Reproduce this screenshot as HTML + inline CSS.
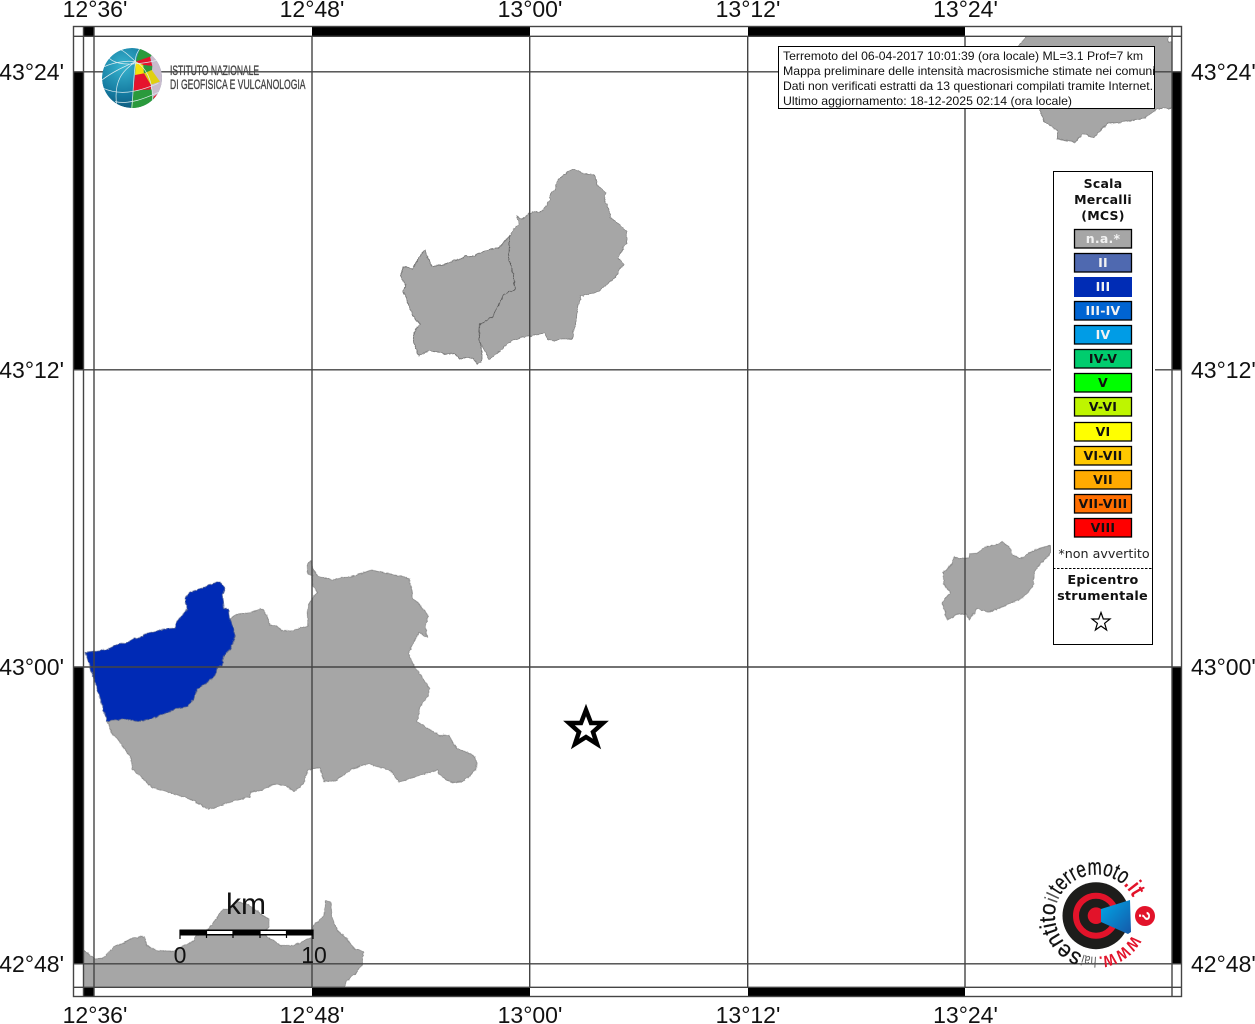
<!DOCTYPE html>
<html><head><meta charset="utf-8"><style>
html,body{margin:0;padding:0;background:#fff}
svg{display:block}
.lab{font:23px "Liberation Sans",sans-serif;fill:#111}
.leg{font:bold 12.500px "DejaVu Sans",sans-serif;text-anchor:middle;letter-spacing:.25px}
.tt{font:12px "Liberation Sans",sans-serif;fill:#111}
</style></head><body>
<svg width="1255" height="1024" viewBox="0 0 1255 1024" xmlns="http://www.w3.org/2000/svg">
<defs>
<clipPath id="mapclip"><rect x="84" y="36" width="1088" height="951"/></clipPath>
<clipPath id="gclip"><circle cx="111" cy="114" r="90"/></clipPath>
<filter id="rough" x="0" y="0" width="100%" height="100%" filterUnits="userSpaceOnUse" primitiveUnits="userSpaceOnUse">
<feTurbulence type="turbulence" baseFrequency=".16" numOctaves="2" seed="4" result="n"/>
<feDisplacementMap in="SourceGraphic" in2="n" scale="2.200" xChannelSelector="R" yChannelSelector="G"/>
</filter>
<radialGradient id="gb" cx="35%" cy="30%" r="80%"><stop offset="0" stop-color="#38b4cf"/><stop offset=".6" stop-color="#14799f"/><stop offset="1" stop-color="#0c4f72"/></radialGradient>
<linearGradient id="meg" x1="0" y1="0" x2="1" y2="1"><stop offset="0" stop-color="#00a8e8"/><stop offset="1" stop-color="#1558a8"/></linearGradient>
<path id="arc" d="M1136.400 922.800A41 41 0 1 1 1055.600 908.600A41 41 0 1 1 1136.400 922.800" fill="none"/>
</defs>
<g clip-path="url(#mapclip)"><g stroke-linejoin="round" filter="url(#rough)">
<g transform="translate(390 160) scale(.33333)" fill="#a6a6a6" stroke="#808080" stroke-width="2.200">
<polygon points="358,225 370,205 385,190 378,168 395,175 418,158 430,152 450,155 465,138 478,118 480,98 492,90 498,65 520,42 550,25 575,38 610,42 622,75 645,95 642,118 655,145 660,170 685,190 708,212 710,245 698,265 682,292 700,312 688,325 675,350 640,378 625,392 572,407 560,450 558,480 548,510 546,535 515,535 490,542 472,535 462,517 420,527 395,530 365,540 345,555 320,578 295,597 285,575 265,540 268,490 305,470 330,420 340,402 373,388 370,345 362,320 355,290"/>
<polygon stroke="#555" points="358,225 355,290 362,320 370,345 373,388 340,402 330,420 305,470 268,490 265,540 272,560 275,600 260,610 248,595 225,590 208,595 190,578 160,580 115,570 85,585 67,540 75,505 88,490 70,470 55,435 38,390 45,375 30,345 38,320 50,318 65,325 80,300 102,268 115,300 127,318 160,312 180,303 210,295 225,286 240,290 270,278 300,265 325,262 340,245"/>
<polyline fill="none" stroke="#808080" points="30,345 38,320 50,318 65,325 80,300 102,268 115,300 127,318 160,312 180,303 210,295 225,286 240,290 270,278 300,265 325,262 340,245 358,225"/>
<polyline fill="none" stroke="#808080" points="272,560 275,600 260,610 248,595 225,590 208,595 190,578 160,580 115,570 85,585 67,540 75,505 88,490 70,470 55,435 38,390 45,375 30,345"/>
</g>
<g transform="translate(75 550) scale(.33333)" stroke-width="2.200">
<polygon fill="#a6a6a6" stroke="#808080" points="95,512 150,505 195,512 240,500 300,475 335,468 355,445 365,415 395,395 420,375 425,350 440,345 445,315 465,295 478,258 462,205 490,190 525,185 560,175 570,185 582,222 605,228 618,240 650,240 698,225 695,185 705,150 725,125 710,105 712,75 697,70 695,40 705,30 712,55 725,75 770,88 800,80 830,78 855,70 885,58 915,65 945,70 1003,85 1012,145 1035,165 1058,195 1050,230 1055,262 1030,245 1010,285 998,310 1015,345 1035,375 1063,415 1055,440 1035,465 1025,512 1060,535 1090,555 1120,555 1145,595 1175,605 1200,620 1205,650 1190,670 1165,692 1130,697 1090,672 1085,658 1040,672 970,695 945,660 880,640 830,655 780,690 745,692 732,650 700,658 688,680 685,700 655,722 630,705 595,700 555,720 525,725 522,740 475,750 400,777 345,745 230,710 170,655 165,620 130,570 110,550"/>
<polygon fill="#002cb5" stroke="#4a5a90" points="30,305 95,297 135,277 150,278 175,264 190,264 215,248 270,235 298,233 305,210 335,177 328,140 345,125 375,115 400,103 432,93 448,112 440,135 445,175 458,175 462,205 475,235 478,258 465,295 445,315 440,345 425,350 420,375 395,395 365,415 355,445 335,468 300,475 240,500 195,512 150,505 95,512"/>
</g>
<g transform="translate(60 880) scale(.33333)" fill="#a6a6a6" stroke="#808080" stroke-width="2.200">
<polygon points="60,205 72,212 105,235 125,235 165,195 185,190 210,175 250,168 258,195 290,210 340,212 400,180 405,168 445,145 470,110 490,85 510,85 530,65 560,70 600,100 625,115 625,140 610,150 618,168 660,195 700,195 755,170 760,135 790,105 795,60 810,65 815,110 830,150 860,175 880,205 908,212 905,250 890,275 860,300 845,340 60,340"/>
</g>
<g transform="translate(930 530) scale(.33333)" fill="#a6a6a6" stroke="#808080" stroke-width="2.200">
<polygon points="38,125 65,100 70,78 85,85 115,82 118,70 140,68 165,48 190,45 215,33 240,55 245,72 268,85 285,75 320,55 360,45 362,65 320,110 310,130 308,165 290,190 270,205 245,215 200,235 175,245 140,235 118,268 105,250 85,250 50,267 42,235 33,218 60,185 40,160"/>
</g>
<polygon fill="#a6a6a6" stroke="#8a8a8a" points="1018,46 1030,30 1167,30 1168,42 1175,42 1175,108 1157,108 1145,117 1130,120 1118,122 1107,123 1093,137 1082,133 1075,142 1057,138 1057,130 1043,120 1040,108 1000,70"/>
</g></g>
<!-- frame strips -->
<g fill="#000">
<rect x="83" y="26" width="11" height="10"/><rect x="312" y="26" width="218" height="10"/><rect x="748" y="26" width="217" height="10"/>
<rect x="83" y="987" width="11" height="10"/><rect x="312" y="987" width="218" height="10"/><rect x="748" y="987" width="217" height="10"/>
<rect x="73" y="72" width="10" height="298"/><rect x="73" y="667" width="10" height="297"/>
<rect x="1172" y="72" width="10" height="298"/><rect x="1172" y="667" width="10" height="297"/>
</g>
<g fill="none" stroke="#444" stroke-width="1.400">
<rect x="73.500" y="26.500" width="1108" height="970"/>
<path d="M83.500 26V997M94 26V997M312 36V987M529.700 36V987M747.700 36V987M965 36V987M1172 26V997"/>
<path d="M73 36.300H1182M73 987.300H1182M73 71.800H1182M73 369.800H1182M73 667H1182M73 963.800H1182"/>
</g>
<!-- labels -->
<g class="lab">
<g text-anchor="middle">
<text x="95" y="17">12°36'</text><text x="312" y="17">12°48'</text><text x="530" y="17">13°00'</text><text x="748" y="17">13°12'</text><text x="965.500" y="17">13°24'</text>
<text x="95" y="1023">12°36'</text><text x="312" y="1023">12°48'</text><text x="530" y="1023">13°00'</text><text x="748" y="1023">13°12'</text><text x="965.500" y="1023">13°24'</text>
</g>
<g text-anchor="end">
<text x="64" y="80">43°24'</text><text x="64" y="378">43°12'</text><text x="64" y="675">43°00'</text><text x="64" y="972">42°48'</text>
</g>
<text x="1191" y="80">43°24'</text><text x="1191" y="378">43°12'</text><text x="1191" y="675">43°00'</text><text x="1191" y="972">42°48'</text>
</g>
<!-- INGV logo -->
<g transform="translate(95 40) scale(.33333)">
<g clip-path="url(#gclip)">
<circle cx="111" cy="114" r="90" fill="url(#gb)"/>
<polygon fill="#c9bccd" points="150,30 215,60 215,170 172,178 165,130 190,125 165,85 165,50"/>
<polygon fill="#2a9a3c" points="122,65 135,25 170,45 165,52"/>
<polygon fill="#e5132d" points="122,65 165,50 172,78 145,75"/>
<polygon fill="#f4e20a" points="122,65 145,75 147,100 120,108"/>
<polygon fill="#2a9a3c" points="145,75 172,78 170,102 147,100"/>
<polygon fill="#e0d010" points="170,90 195,125 165,135 147,100"/>
<polygon fill="#e5132d" points="120,105 147,100 168,135 168,150 115,152"/>
<polygon fill="#2a9a3c" points="115,152 170,148 176,178 150,215 105,215"/>
<polygon fill="#e5132d" points="176,170 190,160 175,190"/>
<g fill="none" stroke="#dcecf0" stroke-width="2.200">
<path d="M122 65C85 90 55 120 65 195M122 65C90 60 50 70 28 80M122 65C115 110 115 160 110 210M122 65C120 50 125 40 135 25M122 65C100 45 90 35 75 28"/>
<path d="M40 52C70 85 150 70 190 60M21 120C60 90 100 75 122 65M25 145C70 165 120 160 190 130M60 185C110 195 160 170 195 155M122 65C150 80 175 120 172 180"/>
</g>
</g>
</g>
<g font-family="'Liberation Sans',sans-serif" fill="#444" stroke="#444" stroke-width=".35" font-size="13.500">
<text x="170" y="75" textLength="89" lengthAdjust="spacingAndGlyphs">ISTITUTO NAZIONALE</text>
<text x="170" y="89" textLength="135.500" lengthAdjust="spacingAndGlyphs">DI GEOFISICA E VULCANOLOGIA</text>
</g>
<!-- title box -->
<rect x="778.500" y="46.500" width="376" height="62" fill="#fff" stroke="#000"/>
<g class="tt">
<text x="783" y="60" textLength="360" lengthAdjust="spacingAndGlyphs">Terremoto del 06-04-2017 10:01:39 (ora locale) ML=3.1 Prof=7 km</text>
<text x="783" y="75" textLength="372" lengthAdjust="spacingAndGlyphs">Mappa preliminare delle intensità macrosismiche stimate nei comuni</text>
<text x="783" y="90" textLength="370" lengthAdjust="spacingAndGlyphs">Dati non verificati estratti da 13 questionari compilati tramite Internet.</text>
<text x="783" y="105" textLength="289" lengthAdjust="spacingAndGlyphs">Ultimo aggiornamento: 18-12-2025 02:14 (ora locale)</text>
</g>
<!-- legend -->
<rect x="1051" y="169" width="104" height="478" fill="#fff"/>
<rect x="1053.500" y="171.500" width="99" height="473" fill="#fff" stroke="#000"/>
<g class="leg" fill="#111">
<text x="1103" y="188">Scala</text><text x="1103" y="204">Mercalli</text><text x="1103" y="220">(MCS)</text>
</g>
<g stroke="#000" stroke-width="1.300">
<rect x="1074.500" y="229.500" width="57" height="18.500" fill="#a6a6a6"/>
<rect x="1074.500" y="253.500" width="57" height="18.500" fill="#4f69b0"/>
<rect x="1074" y="277" width="58" height="20" fill="#002cb5" stroke="none"/>
<rect x="1074.500" y="301.500" width="57" height="18.500" fill="#0064d2"/>
<rect x="1074.500" y="325.500" width="57" height="18.500" fill="#009ce6"/>
<rect x="1074.500" y="349.500" width="57" height="18.500" fill="#00cd6e"/>
<rect x="1074.500" y="373.500" width="57" height="18.500" fill="#00ff00"/>
<rect x="1074.500" y="397.500" width="57" height="18.500" fill="#bef500"/>
<rect x="1074.500" y="422.500" width="57" height="18.500" fill="#ffff00"/>
<rect x="1074.500" y="446.500" width="57" height="18.500" fill="#ffc800"/>
<rect x="1074.500" y="470.500" width="57" height="18.500" fill="#ffaa00"/>
<rect x="1074.500" y="494.500" width="57" height="18.500" fill="#ff6e00"/>
<rect x="1074.500" y="518.500" width="57" height="18.500" fill="#ff0000"/>
</g>
<g class="leg" style="font-size:12.500px">
<g fill="#f2f2f2">
<text x="1103" y="243">n.a.*</text><text x="1103" y="267">II</text><text x="1103" y="291">III</text><text x="1103" y="315">III-IV</text><text x="1103" y="339">IV</text>
</g>
<g fill="#111">
<text x="1103" y="363">IV-V</text><text x="1103" y="387">V</text><text x="1103" y="411">V-VI</text><text x="1103" y="436">VI</text><text x="1103" y="460">VI-VII</text><text x="1103" y="484">VII</text><text x="1103" y="508">VII-VIII</text><text x="1103" y="532">VIII</text>
</g>
</g>
<text x="1104" y="558" text-anchor="middle" font-family="'DejaVu Sans',sans-serif" font-size="12.700" fill="#222">*non avvertito</text>
<line x1="1053" y1="568.500" x2="1152" y2="568.500" stroke="#000" stroke-dasharray="2.500 1.500"/>
<g class="leg" fill="#111" style="font-size:12.800px"><text x="1103" y="584">Epicentro</text><text x="1102.500" y="600">strumentale</text></g>
<polygon points="1101,612.500 1103.300,619 1110,619 1104.600,623.300 1106.600,630 1101,626 1095.400,630 1097.400,623.300 1092,619 1098.700,619" fill="#fff" stroke="#000" stroke-width="1.200"/>
<!-- big star -->
<polygon points="586,710 591,723 603,723 593,732 597,744 586,737 575,744 579,732 569,723 581,723" fill="#fff" stroke="#000" stroke-width="4.500" stroke-linejoin="miter"/>
<!-- scale -->
<g>
<rect x="179.500" y="929.500" width="134" height="6" fill="#000"/>
<rect x="206.800" y="931" width="26" height="3" fill="#fff"/>
<rect x="260" y="931" width="26.500" height="3" fill="#fff"/>
<path d="M180 930V939M206.500 930V938M233 930V938M260 930V938M286.500 930V938M313 930V939" stroke="#000" stroke-width="1.200"/>
<g font-family="'Liberation Sans',sans-serif" fill="#111" text-anchor="middle">
<text x="246" y="914" font-size="30">km</text>
<text x="180" y="963" font-size="23">0</text>
<text x="314" y="963" font-size="23">10</text>
</g>
</g>
<!-- hai sentito logo -->
<circle cx="1096" cy="915.700" r="33.500" fill="#1d1d1b"/>
<circle cx="1096" cy="915.700" r="20" fill="none" stroke="#e2132a" stroke-width="6"/>
<circle cx="1096" cy="915.700" r="8.300" fill="#e2132a"/>
<polygon points="1101,909 1130,900 1131,932 1128,934 1101,922" fill="url(#meg)"/>
<circle cx="1145" cy="916" r="10" fill="#e2132a"/>
<text transform="translate(1145 916) rotate(90)" x="0" y="6" text-anchor="middle" font-family="'Liberation Sans',sans-serif" font-weight="bold" font-size="16" fill="#fff">?</text>
<g font-family="'Liberation Sans',sans-serif">
<text font-size="16" font-weight="bold" fill="#e2132a"><textPath href="#arc" startOffset="12.600" textLength="42" lengthAdjust="spacingAndGlyphs">WWW.</textPath></text>
<text font-size="15" fill="#555"><textPath href="#arc" startOffset="56.500" textLength="14" lengthAdjust="spacingAndGlyphs">hai</textPath></text>
<text font-size="23" fill="#111" stroke="#111" stroke-width=".25"><textPath href="#arc" startOffset="71" textLength="62" lengthAdjust="spacingAndGlyphs">sentito</textPath></text>
<text font-size="19" fill="#555"><textPath href="#arc" startOffset="133.500" textLength="8" lengthAdjust="spacingAndGlyphs">il</textPath></text>
<text font-size="23" fill="#111" stroke="#111" stroke-width=".25"><textPath href="#arc" startOffset="142.500" textLength="73" lengthAdjust="spacingAndGlyphs">terremoto</textPath></text>
<text font-size="23" font-weight="bold" fill="#e2132a"><textPath href="#arc" startOffset="215.500" textLength="16" lengthAdjust="spacingAndGlyphs">.it</textPath></text>
</g>
</svg>
</body></html>
